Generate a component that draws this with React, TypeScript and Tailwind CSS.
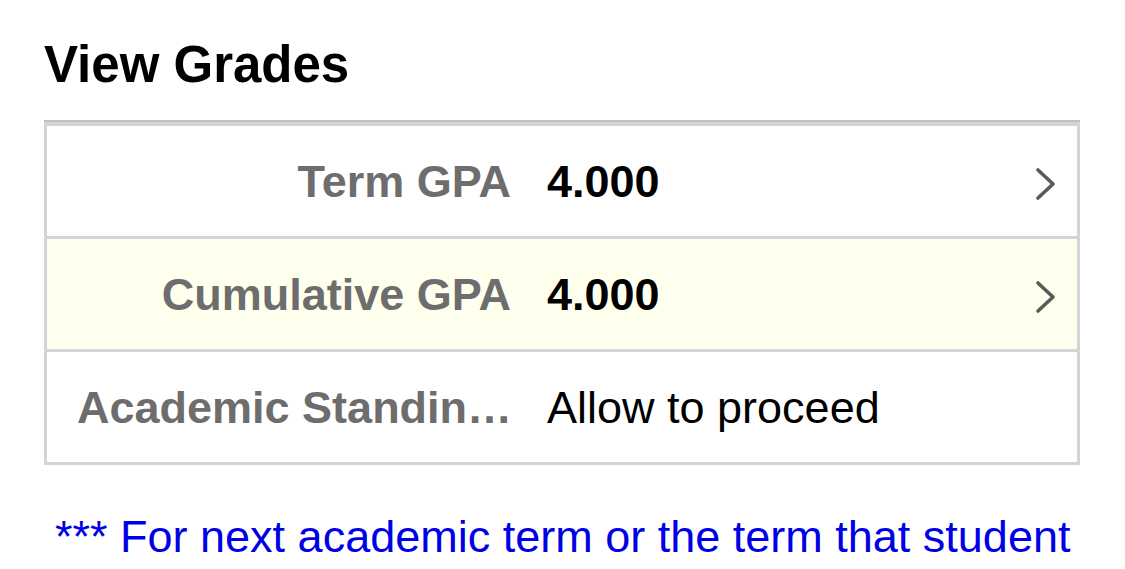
import React from "react";

function Chevron() {
  return (
    <svg width="22" height="34" viewBox="0 0 22 34" className="shrink-0 mr-[20px] mt-[6px]">
      <path d="M3 3 L18 17 L3 31" fill="none" stroke="#5a5a5a" strokeWidth="3.6" strokeLinecap="round" strokeLinejoin="round" />
    </svg>
  );
}

function Row({
  label,
  value,
  bold,
  chevron,
  bg,
}: {
  label: string;
  value: string;
  bold?: boolean;
  chevron?: boolean;
  bg: string;
}) {
  return (
    <div className={`flex items-center h-[110px] ${bg}`}>
      <div className="w-[482px] shrink-0 pl-[30px] pr-[18px] text-right font-bold text-[#6d6d6d] text-[45px] leading-none whitespace-nowrap">
        {label}
      </div>
      <div className={`flex-1 pl-[18px] text-[45px] leading-none text-black whitespace-nowrap ${bold ? "font-bold" : "font-normal"}`}>
        {value}
      </div>
      {chevron && <Chevron />}
    </div>
  );
}

export default function App() {
  return (
    <div className="w-[1125px] min-h-[569px] bg-white font-['Liberation_Sans',Arial,Helvetica,sans-serif] pl-[44px] pr-[45px] pt-[39px]">
      <h1 className="text-[51px] leading-[51px] font-bold text-black">View Grades</h1>
      <div className="mt-[32px] border-[3px] border-t-[4px] border-[#d4d4d4] shadow-[0_-2px_0_#c0c0c0] bg-white">
        <Row label="Term GPA" value="4.000" bold chevron bg="bg-white" />
        <div className="h-[3px] bg-[#d4d4d4]" />
        <Row label="Cumulative GPA" value="4.000" bold chevron bg="bg-[#ffffee]" />
        <div className="h-[3px] bg-[#d4d4d4]" />
        <Row label="Academic Standin…" value="Allow to proceed" bg="bg-white" />
      </div>
      <p className="mt-[49px] pl-[11px] text-[45px] leading-none text-[#0000e6] whitespace-nowrap">
        *** For next academic term or the term that student
      </p>
    </div>
  );
}
